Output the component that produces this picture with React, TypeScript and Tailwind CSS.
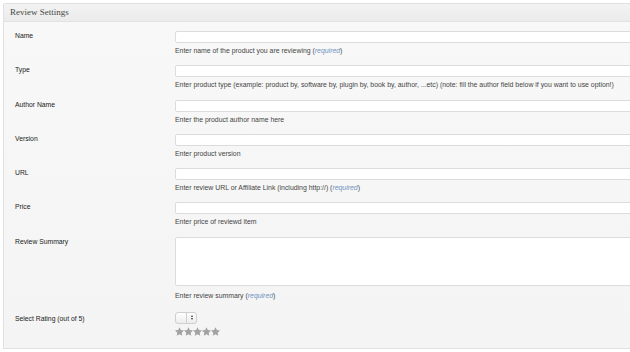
import React from 'react';

type Field = {
  label: string;
  desc: React.ReactNode;
  area?: boolean;
};

const Req = () => (
  <>
    (<span className="italic text-[#6f93c0]">required</span>)
  </>
);

const fields: Field[] = [
  { label: 'Name', desc: <>Enter name of the product you are reviewing <Req /></> },
  {
    label: 'Type',
    desc: 'Enter product type (example: product by, software by, plugin by, book by, author, ...etc) (note: fill the author field below if you want to use option!)',
  },
  { label: 'Author Name', desc: 'Enter the product author name here' },
  { label: 'Version', desc: 'Enter product version' },
  { label: 'URL', desc: <>Enter review URL or Affiliate Link (including http://) <Req /></> },
  { label: 'Price', desc: 'Enter price of reviewd item' },
  { label: 'Review Summary', desc: <>Enter review summary <Req /></>, area: true },
];

const Star = () => (
  <svg viewBox="0 0 24 23" className="w-[9px] h-[9px]" fill="#a2a2a2">
    <path d="M12 0l3.6 7.6 8.4 1.1-6.2 5.8 1.6 8.4L12 18.8 4.6 22.9l1.6-8.4L0 8.7l8.4-1.1z" />
  </svg>
);

const App: React.FC = () => {
  return (
    <div className="w-[630px] h-[352px] overflow-hidden bg-white" style={{ fontFamily: '"Liberation Sans", Arial, sans-serif' }}>
      <div className="ml-[3px] mt-[3px] w-[640px] border border-r-0 border-[#e0e0e0] rounded-tl-[2px] bg-[#f5f5f5]">
        {/* Header */}
        <div className="h-[18px] flex items-center pl-[6px] border-b border-[#e2e2e2] bg-gradient-to-b from-[#f3f3f3] to-[#ebebeb]">
          <span className="text-[9px] text-[#464646]" style={{ fontFamily: '"Liberation Serif", Georgia, serif' }}>
            Review Settings
          </span>
        </div>

        {/* Rows */}
        <div className="bg-gradient-to-b from-[#f8f8f8] to-[#f4f4f4]">
          {fields.map((f) => (
            <div key={f.label} className={`flex ${f.area ? 'pb-[2px]' : 'pb-[1.3px]'}`}>
              <div className="w-[171px] shrink-0 pl-[11px] pt-[10px] text-[6.8px] leading-[8px] text-[#222]">{f.label}</div>
              <div className="flex-1 pt-[9px]">
                <div
                  className={`${f.area ? 'h-[49px]' : 'h-[12px]'} bg-white border border-[#dcdcdc] rounded-[2px]`}
                />
                <div className={`${f.area ? 'mt-[6px]' : 'mt-[4px]'} text-[6.9px] leading-[8px] text-[#444] whitespace-nowrap`}>
                  {f.desc}
                </div>
              </div>
            </div>
          ))}

          {/* Rating row */}
          <div className="flex pb-[12px]">
            <div className="w-[171px] shrink-0 pl-[11px] pt-[13px] text-[6.8px] leading-[8px] text-[#222]">
              Select Rating (out of 5)
            </div>
            <div className="flex-1 pt-[10px]">
              <div className="w-[22px] h-[12px] flex border border-[#cfcfcf] rounded-[3px] bg-gradient-to-b from-white to-[#ececec]">
                <div className="w-[11px] border-r border-[#cfcfcf]" />
                <div className="flex-1 flex flex-col items-center justify-center gap-[1px]">
                  <div className="w-0 h-0 border-l-[1.5px] border-r-[1.5px] border-b-[2px] border-l-transparent border-r-transparent border-b-[#333]" />
                  <div className="w-0 h-0 border-l-[1.5px] border-r-[1.5px] border-t-[2px] border-l-transparent border-r-transparent border-t-[#333]" />
                </div>
              </div>
              <div className="flex mt-[3px]">
                <Star />
                <Star />
                <Star />
                <Star />
                <Star />
              </div>
            </div>
          </div>
        </div>
      </div>
    </div>
  );
};

export default App;
